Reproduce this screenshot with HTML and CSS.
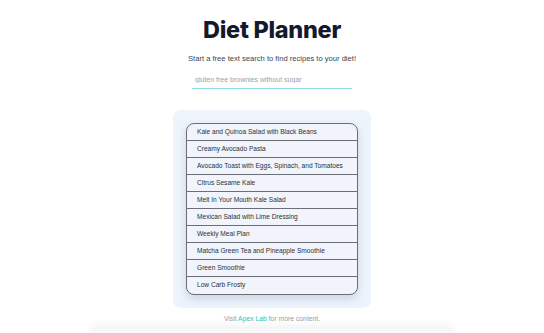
FILE: index.html
```html
<!DOCTYPE html>
<html lang="en">
<head>
    <meta charset="UTF-8">
    <meta name="viewport" content="width=device-width, initial-scale=1.0">
    <title>Diet Planner</title>
    <link rel="stylesheet" href="styles.css">
</head>
<body>
    <div class="page">
        <h1 class="title">Diet Planner</h1>
        <p class="intro">Start a free text search to find recipes to your diet!</p>
        <input class="search" type="text" placeholder="gluten free brownies without sugar">

        <div class="results">
            <ul class="recipes">
                <li>Kale and Quinoa Salad with Black Beans</li>
                <li>Creamy Avocado Pasta</li>
                <li>Avocado Toast with Eggs, Spinach, and Tomatoes</li>
                <li>Citrus Sesame Kale</li>
                <li>Melt In Your Mouth Kale Salad</li>
                <li>Mexican Salad with Lime Dressing</li>
                <li>Weekly Meal Plan</li>
                <li>Matcha Green Tea and Pineapple Smoothie</li>
                <li>Green Smoothie</li>
                <li>Low Carb Frosty</li>
            </ul>
        </div>

        <p class="footer">Visit <a href="#">Apex Lab</a> for more content.</p>
    </div>
    <div class="bottom-bar"></div>
</body>
</html>
```

FILE: styles.css
```css
body {
    margin: 0;
    font-family: "Liberation Sans", Arial, sans-serif;
    background: #fff;
    overflow: hidden;
}
.page {
    display: flex;
    flex-direction: column;
    align-items: center;
}
.title {
    margin: 15px 0 0;
    font-family: Inter, sans-serif;
    font-size: 23.5px;
    font-weight: 800;
    color: #141a2e;
    letter-spacing: -0.3px;
    line-height: 30px;
}
.intro {
    margin: 8px 0 0;
    font-size: 7.6px;
    color: #3d4350;
    line-height: 11px;
}
.search {
    margin-top: 8px;
    width: 160px;
    height: 17px;
    box-sizing: border-box;
    padding: 0 3px 2px;
    border: none;
    border-bottom: 1px solid #8fdde0;
    font-family: inherit;
    font-size: 7px;
    outline: none;
    background: transparent;
}
.search::placeholder {
    color: #9ba0a8;
}
.results {
    margin-top: 21px;
    width: 198px;
    box-sizing: border-box;
    padding: 13px;
    background: #eef4fc;
    border-radius: 8px;
}
.recipes {
    list-style: none;
    margin: 0;
    padding: 0;
    border: 1px solid #6b6e76;
    border-radius: 8px;
    overflow: hidden;
    box-shadow: 0 4px 8px rgba(60, 80, 110, 0.18);
    background: #f1f5fb;
}
.recipes li {
    height: 17px;
    line-height: 16px;
    padding: 0 10px;
    font-size: 6.6px;
    color: #2b2f38;
    border-bottom: 1px solid #6b6e76;
    box-sizing: border-box;
    white-space: nowrap;
}
.recipes li:last-child {
    border-bottom: none;
}
.footer {
    margin: 6px 0 0;
    font-size: 6.8px;
    color: #9a9ea6;
    line-height: 10px;
}
.footer a {
    color: #35c3b0;
    text-decoration: none;
}
.bottom-bar {
    margin: 4px auto 0;
    width: 360px;
    height: 20px;
    background: #f6f7f8;
    box-shadow: 0 -3px 8px rgba(0, 0, 0, 0.05);
}
```
